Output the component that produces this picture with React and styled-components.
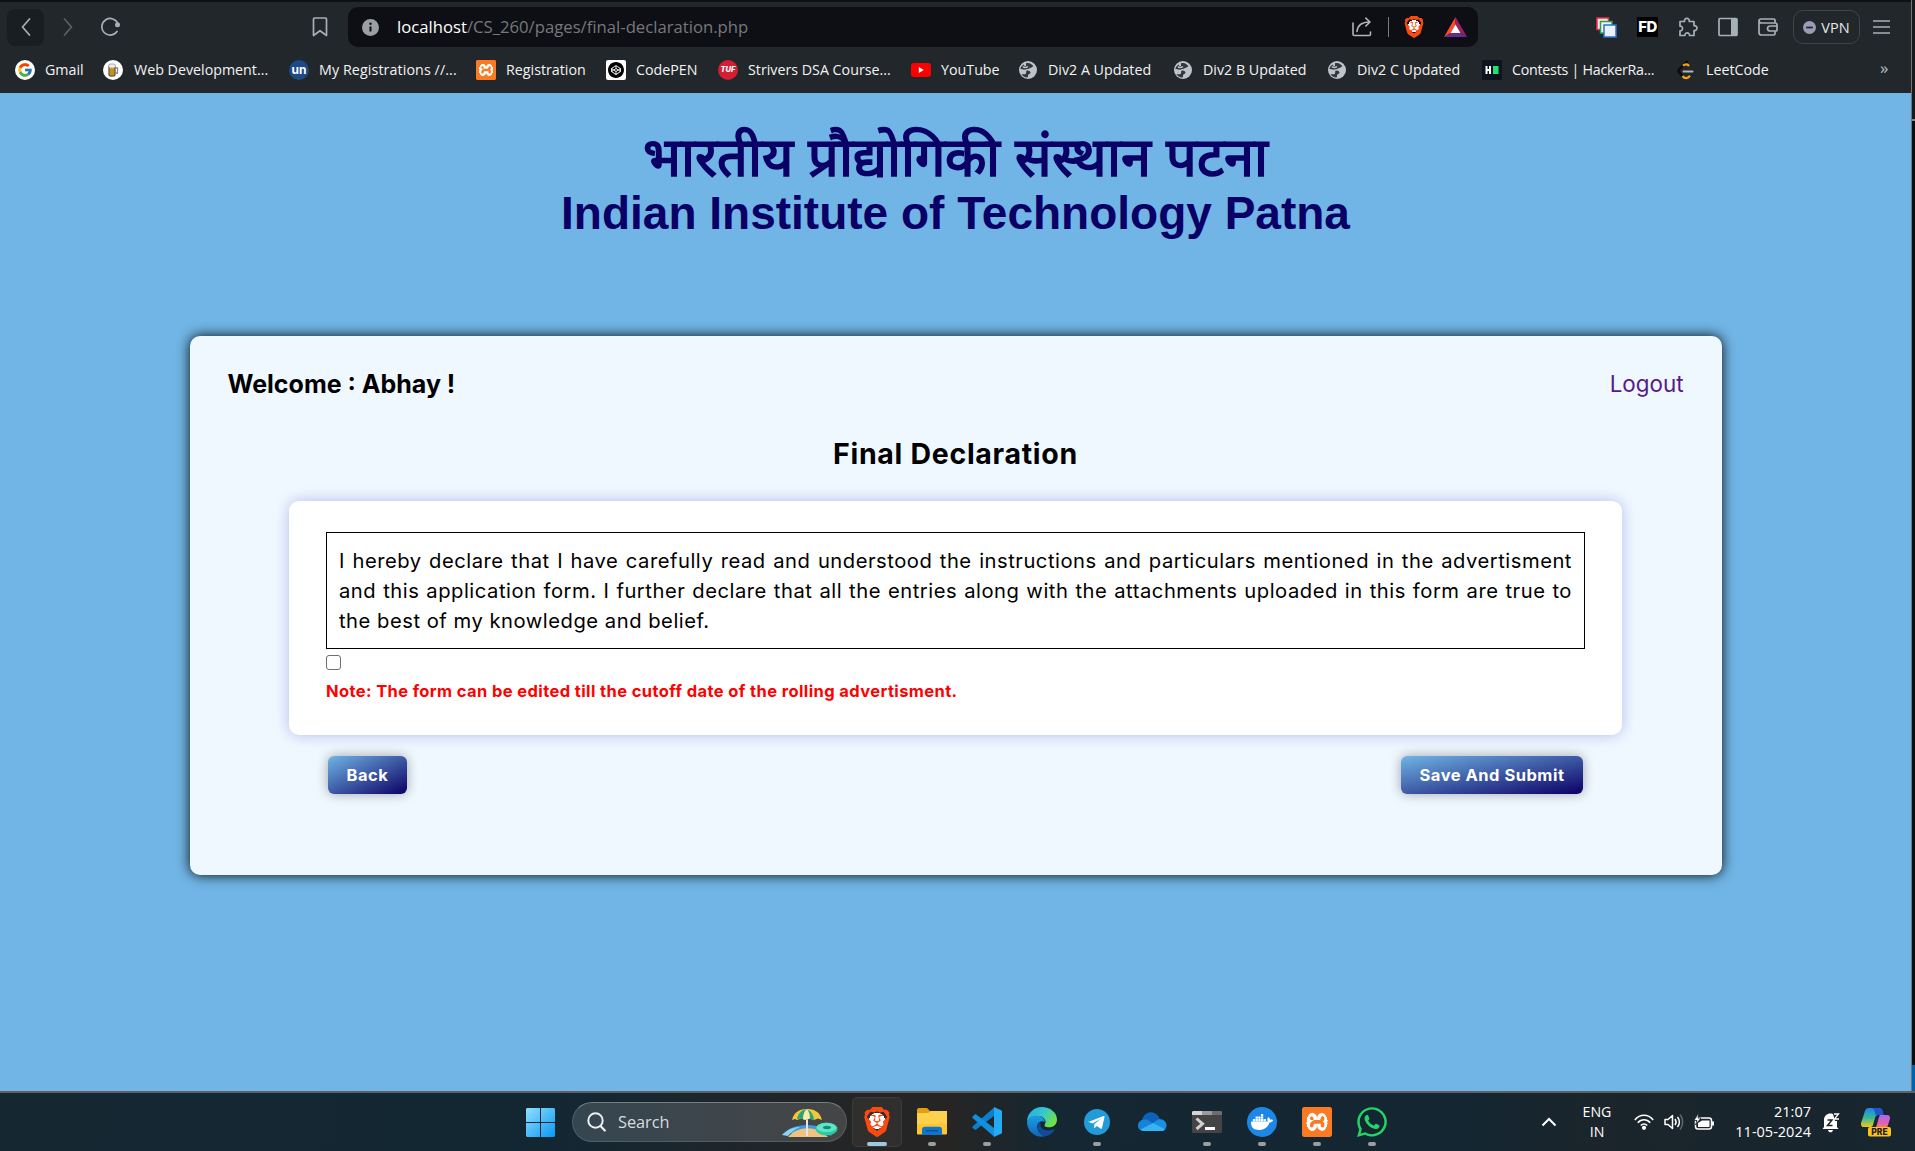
import React from 'react';
import styled, { createGlobalStyle, css } from 'styled-components';
import { SiBrave, SiDocker, SiXampp, SiCodepen } from 'react-icons/si';
import { FaWhatsapp } from 'react-icons/fa';
import { FcGoogle } from 'react-icons/fc';

const GlobalStyle = createGlobalStyle`
  * { box-sizing: border-box; }
  html, body { margin: 0; padding: 0; }
  body { overflow: hidden; background: #0c0c0d; }
  svg { display: block; flex: none; }
`;

const ui = css`font-family: 'Open Sans', 'Noto Sans', sans-serif;`;
const body = css`font-family: Inter, 'Open Sans', sans-serif;`;

const Screen = styled.div`
  width: 1915px;
  height: 1151px;
  display: flex;
  flex-direction: column;
  overflow: hidden;
  ${ui}
`;
const Desktop = styled.div`
  display: flex;
  height: 1091px;
`;
const Browser = styled.div`
  width: 1911px;
  display: flex;
  flex-direction: column;
`;
const Behind = styled.div`
  width: 4px;
  display: flex;
  flex-direction: column;
  justify-content: space-between;
  border-left: 1px solid #757575;
  background: #0c0c0d;
`;
const BehindTop = styled.div`
  height: 121px;
  background: #17191b;
  border-bottom: 2px solid #858585;
`;
const BehindStatus = styled.div`
  height: 26px;
  background: #0063ab;
`;

/* Browser chrome */
const Chrome = styled.div`
  height: 93px;
  background: #22272b;
  border-top: 2px solid #0f1014;
`;
const NavBar = styled.div`
  height: 50px;
  display: flex;
  align-items: center;
  padding-left: 7px;
`;
const NavButton = styled.div`
  width: ${(p) => p.$w}px;
  height: 37px;
  display: flex;
  align-items: center;
  justify-content: center;
  border-radius: 8px;
  background: ${(p) => (p.$raised ? '#1a1e20' : 'transparent')};
  margin-left: ${(p) => p.$gap || 0}px;
`;
const AddressBar = styled.div`
  width: 1130px;
  height: 40px;
  margin-left: 19px;
  padding: 0 11px 0 14px;
  display: flex;
  align-items: center;
  border-radius: 10px;
  background: #0e0f14;
`;
const Url = styled.div`
  flex: 1;
  margin-left: 18px;
  font-size: 16.7px;
  line-height: 24px;
  color: #76787c;
  b { font-weight: 400; color: #fff; }
`;
const AddressDivider = styled.div`
  width: 1px;
  height: 20px;
  margin: 0 14px 0 16px;
  background: #777a7e;
`;
const Extensions = styled.div`
  display: flex;
  align-items: center;
  gap: 20px;
  margin-left: 118px;
`;
const FdBadge = styled.div`
  width: 21px;
  height: 20px;
  display: flex;
  align-items: center;
  justify-content: center;
  background: #000;
  color: #fff;
  font: 800 15px/20px Inter, sans-serif;
  letter-spacing: -0.5px;
`;
const Vpn = styled.div`
  width: 67px;
  height: 34px;
  margin-left: -5px;
  margin-right: -7px;
  display: flex;
  align-items: center;
  justify-content: center;
  gap: 5px;
  border: 1px solid #3b464a;
  border-radius: 10px;
  color: #e4e7ea;
  font-size: 14.5px;
`;
const Bookmarks = styled.div`
  height: 41px;
  display: flex;
  align-items: center;
  padding: 0 0 5px 15px;
`;
const Bookmark = styled.div`
  width: ${(p) => p.$w}px;
  display: flex;
  align-items: center;
  gap: ${(p) => p.$gap || 10}px;
  flex: none;
  white-space: nowrap;
  color: #f2f3f4;
  font-size: 14.25px;
  line-height: 20px;
  letter-spacing: ${(p) => p.$track || 0}px;
`;
const RoundIcon = styled.div`
  width: 20px;
  height: 20px;
  display: flex;
  align-items: center;
  justify-content: center;
  border-radius: ${(p) => p.$r ?? 50}%;
  background: ${(p) => p.$bg};
  color: #fff;
  font: ${(p) => p.$font || '700 11px/20px Inter, sans-serif'};
  letter-spacing: 0;
`;
const Overflow = styled.div`
  color: #b5c0c5;
  font-size: 17px;
  line-height: 20px;
  padding-bottom: 4px;
`;

/* Page */
const Page = styled.main`
  flex: 1;
  display: flex;
  flex-direction: column;
  align-items: center;
  padding-top: 36px;
  background: #70b5e5;
`;
const Institute = styled.header`
  height: 207px;
  text-align: center;
  color: #0b0065;
  font-family: 'Liberation Sans', Arial, sans-serif;
  font-weight: 700;
`;
const Hindi = styled.div`
  font-size: 54px;
  line-height: 56px;
  height: 56px;
`;
const English = styled.div`
  font-size: 46px;
  line-height: 56px;
`;
const Card = styled.section`
  width: 1532px;
  height: 539px;
  padding-top: 29px;
  border-radius: 10px;
  background: #f0f8ff;
  box-shadow: 0 0 13px rgba(0, 0, 0, 0.95);
  ${body}
  color: #000;
`;
const CardTop = styled.div`
  height: 38px;
  padding: 0 38px;
  display: flex;
  align-items: center;
  justify-content: space-between;
`;
const Welcome = styled.div`
  font-size: 25px;
  font-weight: 700;
`;
const Logout = styled.a`
  padding-bottom: 2px;
  font-size: 22.4px;
  color: #551a8b;
`;
const Title = styled.h2`
  margin: 30px 0 26px;
  font-size: 28.5px;
  font-weight: 700;
  line-height: 42px;
  letter-spacing: 0.7px;
  text-align: center;
`;
const Panel = styled.div`
  width: 1333px;
  height: 234px;
  margin: 0 auto;
  padding: 31px 37px 0;
  border-radius: 10px;
  background: #fff;
  box-shadow: 0 0 15px rgba(70, 80, 200, 0.35);
`;
const Declaration = styled.p`
  margin: 0;
  height: 117px;
  padding: 12.5px 12px;
  border: 1px solid #000;
  font-size: 20.2px;
  line-height: 30px;
  letter-spacing: 0.52px;
  text-align: justify;
`;
const Check = styled.input`
  appearance: none;
  display: block;
  width: 15px;
  height: 15px;
  margin: 6px 0 9px;
  border: 1px solid #6f6f6f;
  border-radius: 3px;
  background: #fff;
`;
const Note = styled.div`
  color: #f00;
  font-size: 16.5px;
  font-weight: 700;
  line-height: 24px;
  letter-spacing: 0.39px;
`;
const Actions = styled.div`
  width: 1255px;
  margin: 21px auto 0;
  display: flex;
  justify-content: space-between;
`;
const Action = styled.button`
  width: ${(p) => p.$w}px;
  height: 38px;
  padding: 0;
  border: 0;
  border-radius: 6px;
  background: linear-gradient(to bottom right, #70b5e5, #0b0065);
  box-shadow: 0 0 12px rgba(0, 0, 0, 0.35);
  color: #fff;
  ${body}
  font-size: 16.5px;
  font-weight: 700;
  letter-spacing: 0.5px;
`;

/* Taskbar */
const Taskbar = styled.footer`
  height: 60px;
  display: flex;
  align-items: center;
  padding-left: 526px;
  border-top: 2px solid #5c6266;
  background: linear-gradient(90deg, #152832 0, #132733 550px, #232527 830px, #262524 950px, #142732 1060px, #132632 1450px, #1b252b 1600px, #172630 1915px);
`;
const SearchPill = styled.div`
  width: 275px;
  height: 40px;
  margin: 0 5px 0 17px;
  padding: 0 8px 0 14px;
  display: flex;
  align-items: center;
  gap: 12px;
  border-radius: 20px;
  border: 1px solid rgba(255, 255, 255, 0.12);
  border-top-color: rgba(255, 255, 255, 0.3);
  background: linear-gradient(90deg, #354650, #454546);
  color: #d8dcdf;
  font-size: 16.3px;
`;
const SearchText = styled.span`
  flex: 1;
`;
const Apps = styled.div`
  display: flex;
  gap: 5px;
`;
const App_ = styled.div`
  width: 50px;
  height: 50px;
  padding-top: 9px;
  display: flex;
  flex-direction: column;
  align-items: center;
  gap: 5px;
  border-radius: 5px;
  border: 1px solid ${(p) => (p.$active ? '#3b3b3b' : 'transparent')};
  background: ${(p) => (p.$active ? '#302f2e' : 'transparent')};
`;
const Glyph = styled.div`
  width: 30px;
  height: 30px;
  display: flex;
  align-items: center;
  justify-content: center;
`;
const Running = styled.div`
  width: ${(p) => (p.$active ? 20 : 8)}px;
  height: 4px;
  border-radius: 2px;
  background: ${(p) => (p.$active ? '#a0c8dc' : '#9a9fa2')};
`;
const LionBack = styled.div`
  width: ${(p) => p.$s}px;
  height: ${(p) => p.$s}px;
  display: flex;
  align-items: center;
  justify-content: center;
  background: radial-gradient(circle at 50% 46%, #fff 0 36%, transparent 37%);
`;
const XamppTile = styled.div`
  width: ${(p) => p.$s}px;
  height: ${(p) => p.$s}px;
  border-radius: ${(p) => p.$s / 10}px;
  background: radial-gradient(circle, #fff 0 50%, #fb7a24 51%);
  color: #fb7a24;
`;
const Tray = styled.div`
  margin-left: auto;
  display: flex;
  align-items: center;
  color: #fff;
  font-size: 14.5px;
  line-height: 20px;
`;
const Language = styled.div`
  width: 40px;
  margin: 0 17px 0 20px;
  text-align: center;
  font-size: 14.2px;
`;
const Status = styled.div`
  display: flex;
  align-items: center;
  gap: 10px;
`;
const Clock = styled.div`
  width: 97px;
  text-align: right;
  margin-right: 11px;
`;
const CopilotSlot = styled.div`
  margin: 0 24px 0 21px;
`;

const line = { fill: 'none', stroke: '#a5b1b6', strokeWidth: 1.7, strokeLinecap: 'round', strokeLinejoin: 'round' };

const Lion = ({ s }) => (
  <LionBack $s={s}><SiBrave size={s} color="#fb4a10" /></LionBack>
);
const Xampp = ({ s }) => (
  <XamppTile $s={s}><SiXampp size={s} /></XamppTile>
);
const Globe = () => (
  <svg width="20" height="20" viewBox="0 0 20 20">
    <circle cx="10" cy="10" r="9" fill="#bfc2c8" />
    <path d="M8 3.2c3-1 6 .6 7.4 3-1.400.4-1.800 1.800-3.200 1.800-1.200 0-1 1-2.200 1-1.500 0-2 .8-3.600.6-1.600-.2-2.600-.6-4-.6.3-2 1.800-3.600 3.600-4.500-.2 1.500.7 1.700 2 1.500z" fill="#33383d" />
    <path d="M9.500 10.500c2 0 3 1 3 2.300 0 1.400-2.500 1-2.500 2.600 0 1 .2 1.800-.8 2.200-2.500-.2-4.600-1.600-5.800-3.400 1.700.3 4 .2 4.600-.8.400-.8-.4-2.900 1.500-2.900z" fill="#33383d" />
    <path d="M5 6.500c1.500 1.800 3.600 1 5 .2" stroke="#bfc2c8" strokeWidth="1.500" fill="none" />
  </svg>
);
const Beer = () => (
  <svg width="12" height="14" viewBox="0 0 12 14">
    <rect x="2" y="3" width="6" height="10" rx="1" fill="#eeb62b" stroke="#2b2b2b" />
    <path d="M8 5h2.500v5H8" fill="none" stroke="#888" strokeWidth="1.300" />
    <rect x="1.500" y="1" width="7" height="4" rx="2" fill="#f4efe1" stroke="#777" strokeWidth=".6" />
    <path d="M4 6v6M6 6v6" stroke="#7e5a12" strokeWidth=".8" />
  </svg>
);
const YouTube = () => (
  <svg width="20" height="20" viewBox="0 0 20 20">
    <rect y="3" width="20" height="14" rx="3" fill="#f00" />
    <path d="M7.800 7l5 3-5 3z" fill="#fff" />
  </svg>
);
const HackerRank = () => (
  <svg width="20" height="20" viewBox="0 0 20 20">
    <rect width="20" height="20" fill="#0d141f" />
    <path d="M4.500 6v8M8 6v8M4.500 10H8" stroke="#fff" strokeWidth="2" />
    <rect x="11" y="6" width="5.500" height="8" fill="#1fe36c" />
  </svg>
);
const LeetCode = () => (
  <svg width="20" height="20" viewBox="0 0 20 20">
    <path d="M11.500 1L3.300 9.300c-.9.900-.9 2.300 0 3.200l3.300 3.600" fill="none" stroke="#0a0a0a" strokeWidth="2.300" />
    <path d="M7 5.800c2-2 4.600-1.600 6 .2M6.500 16c2.500 3.200 5.200 2.400 7.500-.3" fill="none" stroke="#f9a11b" strokeWidth="2.300" />
    <path d="M7.500 11.500h9" stroke="#b5b5b5" strokeWidth="2" strokeLinecap="round" />
  </svg>
);
const Bat = () => (
  <svg width="23" height="20" viewBox="0 0 23 20">
    <path d="M11.500 0L0 20l6.500-4 5-8.500z" fill="#ff4b24" />
    <path d="M11.500 0L23 20l-6.500-4-5-8.500z" fill="#9e1f63" />
    <path d="M0 20h23l-6.500-4h-10z" fill="#662d91" />
    <path d="M11.500 7.500L6.500 16h10z" fill="#fff" />
  </svg>
);
const Share = () => (
  <svg width="20" height="20" viewBox="0 0 20 20" fill="none" stroke="#b3b5b8" strokeWidth="1.600" strokeLinecap="round" strokeLinejoin="round">
    <path d="M1 6v11.200c0 .8.500 1.300 1.300 1.300h14.900c.8 0 1.300-.5 1.300-1.300V15" />
    <path d="M5 14.500c.6-6 4.500-9.500 12.500-9.500M13.800 1.200l4.200 3.800-4.200 4" />
  </svg>
);
const Tabs3 = () => (
  <svg width="21" height="21" viewBox="0 0 21 21">
    <rect x="1" y="1" width="11.500" height="11.500" fill="#ffe3e6" stroke="#e0334f" strokeWidth="1.500" />
    <rect x="4.500" y="4.500" width="11.500" height="11.500" fill="#e9f8ec" stroke="#2ba24d" strokeWidth="1.500" />
    <rect x="8" y="8" width="12" height="12" fill="#eaf1ff" stroke="#2e6fdb" strokeWidth="1.500" />
  </svg>
);
const Puzzle = () => (
  <svg width="20" height="20" viewBox="0 0 20 20">
    <path {...line} d="M2 4.500h4.500c-.8-4 5.200-4.500 4.800 0H16v4.200c4-.6 4 5.400 0 4.800v5H11.500c.3-3.500-4.800-3.600-4.600 0H2v-4.600c3.300.2 3.400-5 0-4.800z" />
  </svg>
);
const SidebarIcon = () => (
  <svg width="20" height="20" viewBox="0 0 20 20">
    <rect x="1" y="1.500" width="18" height="17" rx="1" {...line} />
    <rect x="13" y="1.500" width="6" height="17" fill="#a5b1b6" />
  </svg>
);
const Wallet = () => (
  <svg width="20" height="20" viewBox="0 0 20 20">
    <path {...line} d="M17 6V3.200C17 2.500 16.500 2 15.800 2H3C1.800 2 1 2.800 1 4v11.500C1 17 2 18 3.500 18h12.300c.7 0 1.200-.5 1.200-1.200V14M1.300 4.500C1.600 5.500 2.400 6 3.500 6H17c1 0 2 .8 2 2v5c0 .6-.4 1-1 1h-5.500c-4 0-4-5 0-5H19" />
  </svg>
);
const SearchIcon = () => (
  <svg width="19" height="20" viewBox="0 0 19 20">
    <circle cx="8.500" cy="8.500" r="7.200" fill="none" stroke="#eceff0" strokeWidth="2" />
    <path d="M13.500 14l4.300 4.500" stroke="#eceff0" strokeWidth="2.200" strokeLinecap="round" />
  </svg>
);
const Beach = () => (
  <svg width="56" height="32" viewBox="0 0 56 32">
    <path d="M0 29C8 19 26 16 42 22l8 8c-16-5-32-5-50-1z" fill="#3a9be0" />
    <path d="M6 31c8-10 24-11 34-5l6 5z" fill="#f1c27d" />
    <path d="M0 29c6-6 12-8 18-8-5 2-9 5-12 9z" fill="#8bd5ee" />
    <path d="M25 3v27" stroke="#e9dfee" strokeWidth="2" />
    <path d="M10 14C12 5 19 3 25 3s13 2 15 11l-4-1.500-4 1.500-4-1.500-5 1.500-4-1.500-4 1.500-2-1z" fill="#f3c63a" />
    <path d="M25 3c-6 1-9 5-10 10l4-.5 4 1.500 2-.5 3-.5 4 1.500c0-5-3-10-7-11z" fill="#26a678" />
    <path d="M25 3c-3 2-4 6-4 10l2 1 5-1.500c0-4-1-7-3-9.500z" fill="#fbe9a9" />
    <ellipse cx="44.500" cy="23" rx="11" ry="6.500" fill="#2cc9a4" />
    <ellipse cx="44.500" cy="21.500" rx="10" ry="4.500" fill="#5fe6c4" />
    <ellipse cx="45" cy="21.500" rx="4" ry="1.700" fill="#178a78" />
  </svg>
);
const Folder = () => (
  <svg width="30" height="28" viewBox="0 0 30 28">
    <path d="M0 2c0-1 .7-2 2-2h8l3 3h15c1 0 2 1 2 2v6H0z" fill="#e0a010" />
    <path d="M0 5h11l3-2h16v23H0z" fill="#ffd04c" />
    <path d="M0 25V16h30v9c0 1-.8 1.500-1.500 1.500h-27C.7 26.500 0 26 0 25z" fill="#fdc62f" />
    <path d="M5 27v-5c0-2 1-3.200 3-3.200h14c2 0 3 1.200 3 3.200v5z" fill="#0f74cc" />
    <path d="M9 22.700h12" stroke="#0a4c94" strokeWidth="1.300" />
  </svg>
);
const VsCode = () => (
  <svg width="30" height="30" viewBox="0 0 30 30">
    <path d="M0.500 19.500L22 .5V9L3.500 23 .5 21z" fill="#0a7fd0" />
    <path d="M.5 9.500L3.500 7 22 21v8.500L.5 11z" fill="#1190df" />
    <path d="M22 0l7 3.300c.6.300 1 .8 1 1.500v20.400c0 .7-.4 1.200-1 1.500L22 30z" fill="#27a9f4" />
  </svg>
);
const Edge = () => (
  <svg width="30" height="30" viewBox="0 0 30 30">
    <defs>
      <linearGradient id="edgeTop" x1="0" y1="0" x2="1" y2=".5"><stop offset="0" stopColor="#2aa6e8" /><stop offset=".55" stopColor="#34c8cd" /><stop offset="1" stopColor="#6fe04b" /></linearGradient>
      <linearGradient id="edgeLow" x1="0" y1="0" x2="0" y2="1"><stop offset="0" stopColor="#1aa0e2" /><stop offset="1" stopColor="#1164b8" /></linearGradient>
    </defs>
    <path d="M0 15C0 6 7 0 15 0s15 5.500 15 12.500c0 5-3.500 7.800-8 7.800-3.500 0-5.500-1.300-4-3.300 2-3-1-8-7-8C5 9 .5 12 0 15z" fill="url(#edgeTop)" />
    <path d="M0 15c.5-4 5-7 10-6.500 5 .5 8 3.500 7.800 6.500-4-2-8 1-7.500 5.500.4 4 3.500 7.500 8.200 8.800C9 31.500 0 25 0 15z" fill="url(#edgeLow)" />
    <path d="M13.500 14.500c-5 3.500-3 12.500 5 14.800 4-.8 7-3 9-6.300.4-.8-.3-1.200-1-.8-6.500 3.200-15 .3-13-7.700z" fill="#124a98" />
  </svg>
);
const Telegram = () => (
  <svg width="26" height="26" viewBox="0 0 26 26">
    <circle cx="13" cy="13" r="13" fill="#229bd8" />
    <path d="M5 12.800L19.500 7c.7-.2 1.200.1 1 1L18 19c-.2.900-.8 1-1.500.6l-3.700-2.700-1.900 1.800c-.4.400-.8.200-.8-.3l.2-3.200 6.500-5.800-8 5-3.600-1.100c-.8-.2-.8-.8-.2-1z" fill="#fff" />
  </svg>
);
const OneDrive = () => (
  <svg width="30" height="20" viewBox="0 0 30 20">
    <path d="M5 8C7 1 12-.5 16 .5c4 1 6 4 7 7.500L16 13z" fill="#0d62b8" />
    <path d="M6 19C0 18.500-1 10 5 8c4-1.500 7 .5 10 3l-8 8z" fill="#1683d8" />
    <path d="M22 7c5 0 7.500 3 7.500 6.500S27 19 24 19L14 12z" fill="#1b8fe0" />
    <path d="M3.500 17.500L16 11l12 6.200C27 18.500 25.500 19 24 19H7c-1.300 0-2.700-.6-3.500-1.500z" fill="#35b4f3" />
  </svg>
);
const Terminal = () => (
  <svg width="30" height="22" viewBox="0 0 30 22">
    <rect width="30" height="22" rx="1" fill="#444" />
    <path d="M0 4V1l1-1h9v4z" fill="#d5d5d5" />
    <path d="M10 0h10v4H10z" fill="#9b9b9b" />
    <path d="M20 0h9l1 1v3H20z" fill="#6d6d6d" />
    <path d="M4.500 7.500l6 5.300-6 5.200" stroke="#d0d0d0" strokeWidth="3" fill="none" />
    <path d="M13 17.500h10" stroke="#fff" strokeWidth="3" />
  </svg>
);
const DockerDisc = styled.div`
  width: 30px;
  height: 30px;
  display: flex;
  align-items: center;
  justify-content: center;
  border-radius: 50%;
  background: #1d87e8;
`;
const Bell = () => (
  <svg width="18" height="21" viewBox="0 0 18 21">
    <path d="M2 15V8c0-4 3-6.500 6.500-6.500S15 4 15 8v7l1.500 2H.5z" fill="#fff" />
    <path d="M6 18h5c-.3 1.500-1.300 2.300-2.500 2.300S6.300 19.500 6 18z" fill="#fff" />
    <path d="M5.500 8h4.500l-4.500 5.500h5" stroke="#18252d" strokeWidth="1.500" fill="none" />
    <path d="M10.500 0H18v9h-5z" fill="#18252d" />
    <path d="M12 2h4.500L12.500 7H17" stroke="#fff" strokeWidth="1.300" fill="none" />
  </svg>
);
const Copilot = () => (
  <svg width="30" height="30" viewBox="0 0 30 30">
    <defs>
      <linearGradient id="copL" x1="0" y1="0" x2="0" y2="1"><stop offset="0" stopColor="#1c86ee" /><stop offset=".5" stopColor="#35b59a" /><stop offset="1" stopColor="#f2c71b" /></linearGradient>
      <linearGradient id="copR" x1="0" y1="0" x2="0" y2="1"><stop offset="0" stopColor="#a46af0" /><stop offset=".6" stopColor="#e25fb6" /><stop offset="1" stopColor="#f57f52" /></linearGradient>
    </defs>
    <path d="M8 1h10c2 0 3 1 3.500 3l1 4h-5c-2 0-3 1-3.500 3l-2 7c-.5 1.500-1.500 2-3 2H3c-2.500 0-3.500-2-2.800-4.500L4 4c.6-2 2-3 4-3z" fill="url(#copL)" />
    <path d="M19 1.500c1.500.5 2 1.500 2.500 3l1 3.500h-5c-1 0-2 .5-2.500 1.300L13.500 4c-.5-1.600-1.500-3-3-3H18z" fill="#2253ce" />
    <path d="M19 8h7c2.500 0 3.500 2 2.800 4.500L26 21H12.500c2 0 2.700-1 3.200-2.800L18 10z" fill="url(#copR)" />
    <rect x="7" y="20" width="23" height="9.500" rx="2" fill="#fcc419" />
    <text x="18.500" y="28" textAnchor="middle" fontFamily="Inter, sans-serif" fontWeight="800" fontSize="8.500" fill="#1c1c1c">PRE</text>
  </svg>
);

const BOOKMARKS = [
  { label: 'Gmail', w: 88, icon: <RoundIcon $bg="#fff"><FcGoogle size={16} /></RoundIcon> },
  { label: 'Web Development...', w: 186, gap: 11, icon: <RoundIcon $bg="#fff"><Beer /></RoundIcon> },
  { label: 'My Registrations //...', w: 187, track: 0.1, icon: <RoundIcon $bg="#1c4a84" $font="700 12px/18px Inter, sans-serif">un</RoundIcon> },
  { label: 'Registration', w: 130, icon: <Xampp s={20} /> },
  { label: 'CodePEN', w: 112, icon: <RoundIcon $bg="#fff" $r={10}><SiCodepen size={16} color="#000" /></RoundIcon> },
  { label: 'Strivers DSA Course...', w: 193, icon: <RoundIcon $bg="#d31f33" $font="italic 800 7.500px/20px Inter, sans-serif">TUF</RoundIcon> },
  { label: 'YouTube', w: 107, icon: <YouTube /> },
  { label: 'Div2 A Updated', w: 155, icon: <Globe /> },
  { label: 'Div2 B Updated', w: 154, icon: <Globe /> },
  { label: 'Div2 C Updated', w: 155, icon: <Globe /> },
  { label: 'Contests | HackerRa...', w: 194, track: -0.25, icon: <HackerRank /> },
  { label: 'LeetCode', w: 204, icon: <LeetCode /> },
];

const APPS = [
  { id: 'brave', icon: <Lion s={30} />, active: true, running: true },
  { id: 'files', icon: <Folder />, running: true },
  { id: 'code', icon: <VsCode />, running: true },
  { id: 'edge', icon: <Edge /> },
  { id: 'telegram', icon: <Telegram />, running: true },
  { id: 'onedrive', icon: <OneDrive /> },
  { id: 'terminal', icon: <Terminal />, running: true },
  { id: 'docker', icon: <DockerDisc><SiDocker size={22} color="#fff" /></DockerDisc>, running: true },
  { id: 'xampp', icon: <Xampp s={30} />, running: true },
  { id: 'whatsapp', icon: <FaWhatsapp size={34} color="#25d366" />, running: true },
];

export default function App() {
  return (
    <Screen>
      <GlobalStyle />
      <Desktop>
        <Browser>
          <Chrome>
            <NavBar>
              <NavButton $w={37} $raised>
                <svg width="12" height="18" viewBox="0 0 12 18"><path {...line} d="M9.500 1L2.500 9l7 8" /></svg>
              </NavButton>
              <NavButton $w={20} $gap={14}>
                <svg width="12" height="18" viewBox="0 0 12 18"><path {...line} stroke="#596165" d="M2.500 1l7 8-7 8" /></svg>
              </NavButton>
              <NavButton $w={22} $gap={21}>
                <svg width="20" height="20" viewBox="0 0 20 20"><path {...line} d="M18 7A8.300 8.300 0 1 0 17 14.500" /><circle cx="17.500" cy="7.800" r="2.500" fill="#a5b1b6" /></svg>
              </NavButton>
              <NavButton $w={18} $gap={190}>
                <svg width="16" height="20" viewBox="0 0 16 20"><path {...line} d="M1.500 2c0-.6.400-1 1-1h11c.6 0 1 .4 1 1v16.500L8 13.700l-6.500 4.800z" /></svg>
              </NavButton>
              <AddressBar>
                <svg width="17" height="17" viewBox="0 0 17 17">
                  <circle cx="8.500" cy="8.500" r="8.500" fill="#9b9ea3" />
                  <path d="M8.500 7.500v5" stroke="#0e0f14" strokeWidth="2" /><circle cx="8.500" cy="4.800" r="1.200" fill="#0e0f14" />
                </svg>
                <Url><b>localhost</b>/CS_260/pages/final-declaration.php</Url>
                <Share />
                <AddressDivider />
                <Lion s={22} />
                <NavButton $w={23} $gap={19}><Bat /></NavButton>
              </AddressBar>
              <Extensions>
                <Tabs3 />
                <FdBadge>FD</FdBadge>
                <Puzzle />
                <SidebarIcon />
                <Wallet />
                <Vpn>
                  <svg width="13" height="13" viewBox="0 0 13 13"><circle cx="6.500" cy="6.500" r="6.500" fill="#9a9cb4" /><path d="M3.200 6.500h6.600" stroke="#22272b" strokeWidth="1.800" /></svg>
                  VPN
                </Vpn>
                <svg width="18" height="16" viewBox="0 0 18 16"><path {...line} strokeLinecap="butt" d="M0 2h17M0 8h17M0 14h17" /></svg>
              </Extensions>
            </NavBar>
            <Bookmarks>
              {BOOKMARKS.map((b) => (
                <Bookmark key={b.label} $w={b.w} $gap={b.gap} $track={b.track}>{b.icon}{b.label}</Bookmark>
              ))}
              <Overflow>»</Overflow>
            </Bookmarks>
          </Chrome>
          <Page>
            <Institute>
              <Hindi>भारतीय प्रौद्योगिकी संस्थान पटना</Hindi>
              <English>Indian Institute of Technology Patna</English>
            </Institute>
            <Card>
              <CardTop>
                <Welcome>Welcome : Abhay !</Welcome>
                <Logout>Logout</Logout>
              </CardTop>
              <Title>Final Declaration</Title>
              <Panel>
                <Declaration>
                  I hereby declare that I have carefully read and understood the instructions and particulars mentioned in the advertisment and this application form. I further declare that all the entries along with the attachments uploaded in this form are true to the best of my knowledge and belief.
                </Declaration>
                <Check type="checkbox" />
                <Note>Note: The form can be edited till the cutoff date of the rolling advertisment.</Note>
              </Panel>
              <Actions>
                <Action $w={79}>Back</Action>
                <Action $w={182}>Save And Submit</Action>
              </Actions>
            </Card>
          </Page>
        </Browser>
        <Behind>
          <BehindTop />
          <BehindStatus />
        </Behind>
      </Desktop>
      <Taskbar>
        <svg width="29" height="29" viewBox="0 0 29 29">
          <defs><linearGradient id="win" x1="0" y1="0" x2="1" y2="1"><stop offset="0" stopColor="#8fe0fc" /><stop offset="1" stopColor="#0a97f5" /></linearGradient></defs>
          <path fill="url(#win)" d="M1 0h13v14H0V1zM15 0h13l1 1v13H15zM0 15h14v14H1l-1-1zM15 15h14v13l-1 1H15z" />
        </svg>
        <SearchPill>
          <SearchIcon />
          <SearchText>Search</SearchText>
          <Beach />
        </SearchPill>
        <Apps>
          {APPS.map((a) => (
            <App_ key={a.id} $active={a.active}>
              <Glyph>{a.icon}</Glyph>
              {a.running && <Running $active={a.active} />}
            </App_>
          ))}
        </Apps>
        <Tray>
          <svg width="16" height="10" viewBox="0 0 16 10"><path d="M1.500 8.500L8 2l6.500 6.500" fill="none" stroke="#fff" strokeWidth="2" /></svg>
          <Language>ENG<br />IN</Language>
          <Status>
            <svg width="20" height="16" viewBox="0 0 20 16" fill="none" stroke="#fff" strokeWidth="1.600">
              <path d="M.8 6C6-.3 14-.3 19.200 6M3.800 8.800c3.500-4 8.900-4 12.400 0M6.800 11.500c1.800-2 4.600-2 6.400 0" /><circle cx="10" cy="13.800" r="1.300" fill="#fff" />
            </svg>
            <svg width="20" height="18" viewBox="0 0 20 18" fill="none" stroke="#fff" strokeWidth="1.500" strokeLinejoin="round">
              <path d="M1 6.500h3L8.500 2.500v13L4 11.500H1z" /><path d="M11 6c1.300 1.800 1.300 4.200 0 6M13.500 4c2.300 3 2.300 7 0 10" /><path d="M16 1.500c3.600 4.500 3.600 10.500 0 15" stroke="#5d686e" />
            </svg>
            <svg width="20" height="18" viewBox="0 0 20 18">
              <rect x="1.500" y="5" width="16" height="11" rx="2.500" fill="none" stroke="#fff" strokeWidth="1.500" />
              <path d="M4 14V10l4-2.500h7.500V14z" fill="#fff" /><path d="M18 8.500h2v4h-2z" fill="#fff" />
              <path d="M4.500 0L0 7.500h3L1.500 12 7 5H4z" fill="#fff" stroke="#18252d" strokeWidth=".8" />
            </svg>
          </Status>
          <Clock>21:07<br />11-05-2024</Clock>
          <Bell />
          <CopilotSlot><Copilot /></CopilotSlot>
        </Tray>
      </Taskbar>
    </Screen>
  );
}
